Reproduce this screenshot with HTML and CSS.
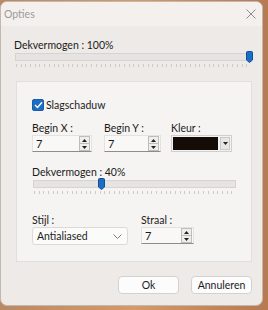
FILE: index.html
```html
<!DOCTYPE html>
<html>
<head>
    <title>Opties</title>
    <link rel="stylesheet" href="styles.css">
</head>
<body>
    <div class="window">
        <div class="titlebar">
            <span class="title">Opties</span>
            <svg class="close" width="10" height="10" viewBox="0 0 10 10">
                <path d="M0.5 0.5 L9.5 9.5 M9.5 0.5 L0.5 9.5" stroke="#8c8c8c" stroke-width="1" fill="none"/>
            </svg>
        </div>
        <div class="content">
            <div class="label">Dekvermogen : 100%</div>
            <div class="slider wide">
                <div class="track"></div>
                <svg class="thumb" style="left: 232px" width="7" height="12" viewBox="0 0 7 12">
                    <path d="M0.5 1.5 Q0.5 0.5 1.5 0.5 L5.5 0.5 Q6.5 0.5 6.5 1.5 L6.5 9 L3.5 11.5 L0.5 9 Z" fill="#1c6dc4" stroke="#104f96" stroke-width="1"/>
                </svg>
                <div class="ticks"></div>
            </div>

            <div class="group">
                <label class="check">
                    <span class="box">
                        <svg width="9" height="8" viewBox="0 0 9 8">
                            <path d="M1 4 L3.5 6.5 L8 1.2" stroke="#fff" stroke-width="1.4" fill="none"/>
                        </svg>
                    </span>
                    Slagschaduw
                </label>

                <div class="row">
                    <div class="field fx">
                        <div class="label">Begin X :</div>
                        <div class="spin w60">
                            <span class="val">7</span>
                            <span class="arrows">
                                <span class="up"><svg width="5" height="3" viewBox="0 0 5 3"><path d="M0 3 L2.5 0 L5 3 Z" fill="#222"/></svg></span>
                                <span class="down"><svg width="5" height="3" viewBox="0 0 5 3"><path d="M0 0 L2.5 3 L5 0 Z" fill="#222"/></svg></span>
                            </span>
                        </div>
                    </div>
                    <div class="field fy">
                        <div class="label">Begin Y :</div>
                        <div class="spin w57">
                            <span class="val">7</span>
                            <span class="arrows">
                                <span class="up"><svg width="5" height="3" viewBox="0 0 5 3"><path d="M0 3 L2.5 0 L5 3 Z" fill="#222"/></svg></span>
                                <span class="down"><svg width="5" height="3" viewBox="0 0 5 3"><path d="M0 0 L2.5 3 L5 0 Z" fill="#222"/></svg></span>
                            </span>
                        </div>
                    </div>
                    <div class="field fk">
                        <div class="label">Kleur :</div>
                        <div class="color">
                            <span class="swatch"></span>
                            <span class="drop"><svg width="5" height="3" viewBox="0 0 5 3"><path d="M0 0 L2.5 3 L5 0 Z" fill="#222"/></svg></span>
                        </div>
                    </div>
                </div>

                <div class="label second">Dekvermogen : 40%</div>
                <div class="slider narrow">
                    <div class="track"></div>
                    <svg class="thumb" style="left: 66px" width="7" height="12" viewBox="0 0 7 12">
                        <path d="M0.5 1.5 Q0.5 0.5 1.5 0.5 L5.5 0.5 Q6.5 0.5 6.5 1.5 L6.5 9 L3.5 11.5 L0.5 9 Z" fill="#1c6dc4" stroke="#104f96" stroke-width="1"/>
                    </svg>
                    <div class="ticks"></div>
                </div>

                <div class="row bottom">
                    <div class="field">
                        <div class="label">Stijl :</div>
                        <div class="select">
                            <span>Antialiased</span>
                            <svg width="9" height="5" viewBox="0 0 9 5">
                                <path d="M0.5 0.5 L4.5 4.5 L8.5 0.5" stroke="#7a7a7a" fill="none"/>
                            </svg>
                        </div>
                    </div>
                    <div class="field fs">
                        <div class="label">Straal :</div>
                        <div class="spin w53">
                            <span class="val">7</span>
                            <span class="arrows">
                                <span class="up"><svg width="5" height="3" viewBox="0 0 5 3"><path d="M0 3 L2.5 0 L5 3 Z" fill="#222"/></svg></span>
                                <span class="down"><svg width="5" height="3" viewBox="0 0 5 3"><path d="M0 0 L2.5 3 L5 0 Z" fill="#222"/></svg></span>
                            </span>
                        </div>
                    </div>
                </div>
            </div>

            <div class="buttons">
                <button>Ok</button>
                <button>Annuleren</button>
            </div>
        </div>
    </div>
</body>
</html>
```

FILE: styles.css
```css
body {
    margin: 0;
    width: 268px;
    height: 310px;
    overflow: hidden;
    background: linear-gradient(90deg, #b98a66, #d39a6a 50%, #b57a52);
    font-family: Lato, "Noto Sans", sans-serif;
    font-size: 10.5px;
    color: #1b1b1b;
}
.window {
    width: 261px;
    height: 303px;
    margin-top: 1px;
    border: 1px solid #c4b8ae;
    border-radius: 7px;
    background: #edeae7;
    overflow: hidden;
}
.titlebar {
    height: 24px;
    display: flex;
    align-items: center;
    justify-content: space-between;
    padding: 0 5px 0 3px;
    background: #f3f0ee;
    color: #9b9b9b;
}
.close {
    margin-right: 1px;
}
.content {
    padding: 12px 10px 0 13px;
}
.label {
    height: 15px;
    line-height: 15px;
}
.slider {
    position: relative;
    height: 15px;
}
.slider.wide {
    width: 238px;
}
.slider.narrow {
    width: 204px;
}
.track {
    position: absolute;
    left: 1px;
    right: 0;
    top: 0;
    height: 6px;
    background: #e6e4e2;
    border: 1px solid #d6d3d0;
}
.thumb {
    position: absolute;
    top: -2px;
}
.ticks {
    position: absolute;
    left: 2px;
    right: 1px;
    top: 11px;
    height: 3px;
    background: repeating-linear-gradient(90deg, #cdcac7 0 1px, transparent 1px 4.7px);
}
.group {
    margin: 13px 0 0 2px;
    width: 236px;
    height: 181px;
    background: #f6f4f2;
    border: 1px solid #e2dedb;
    padding: 0 0 0 15px;
    box-sizing: border-box;
}
.check {
    display: flex;
    align-items: center;
    gap: 2px;
    margin-top: 16px;
    height: 13px;
}
.box {
    width: 12px;
    height: 12px;
    border-radius: 2px;
    background: #1c6dc4;
    border: 1px solid #1a5ea8;
    box-sizing: border-box;
    display: flex;
    align-items: center;
    justify-content: center;
}
.row {
    display: flex;
    margin-top: 10px;
}
.row .label {
    height: 14px;
    line-height: 14px;
}
.fy {
    margin-left: 12px;
}
.fk {
    margin-left: 10px;
}
.fs {
    margin-left: 13px;
}
.spin {
    display: flex;
    justify-content: space-between;
    align-items: center;
    height: 17px;
    background: #f9f8f7;
    border: 1px solid #e4e1de;
    border-bottom-color: #8e8b88;
    box-sizing: border-box;
}
.w60 { width: 60px; }
.w57 { width: 57px; }
.w53 { width: 53px; }
.val {
    padding-left: 3px;
    font-size: 11px;
}
.arrows {
    display: flex;
    flex-direction: column;
    margin-right: 1px;
}
.arrows span {
    display: flex;
    align-items: center;
    justify-content: center;
    width: 9px;
    height: 6px;
    background: #eeeeee;
    border: 1px solid #bdbdbd;
}
.arrows .down {
    border-top: none;
}
.color {
    display: flex;
    align-items: center;
    gap: 2px;
    width: 61px;
    height: 17px;
    border: 1px solid #cfcfcf;
    box-sizing: border-box;
    padding: 1px;
    background: #f2f2f2;
}
.swatch {
    width: 46px;
    height: 13px;
    background: #150b07;
}
.drop {
    display: flex;
    align-items: center;
    justify-content: center;
    width: 10px;
    height: 13px;
    background: #e6e6e6;
    border: 1px solid #c9c9c9;
    box-sizing: border-box;
}
.label.second {
    height: 16px;
    line-height: 16px;
    margin-top: 12px;
}
.row.bottom {
    margin-top: 18px;
}
.select {
    display: flex;
    justify-content: space-between;
    align-items: center;
    width: 96px;
    height: 18px;
    padding: 0 5px 0 4px;
    background: #fbfbfa;
    border: 1px solid #dcd9d6;
    border-radius: 3px;
    box-sizing: border-box;
}
.buttons {
    display: flex;
    justify-content: flex-end;
    gap: 12px;
    margin-top: 14px;
}
button {
    width: 61px;
    height: 18px;
    padding: 0;
    font-family: inherit;
    font-size: 10.5px;
    color: #1b1b1b;
    background: #fcfcfc;
    border: 1px solid #d4d1ce;
    border-radius: 4px;
}
```
